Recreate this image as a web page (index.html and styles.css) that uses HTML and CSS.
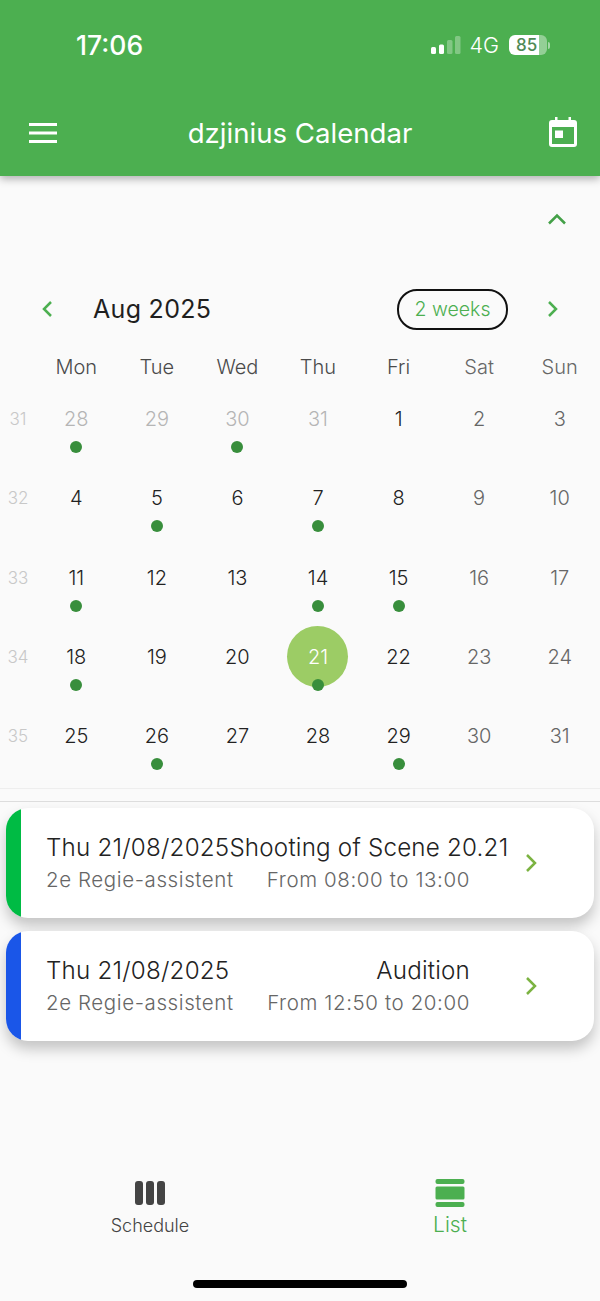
FILE: index.html
```html
<!DOCTYPE html>
<html lang="en">
<head>
    <meta charset="UTF-8">
    <meta name="viewport" content="width=device-width, initial-scale=1.0">
    <title>dzjinius Calendar</title>
    <link rel="stylesheet" href="styles.css">
</head>
<body>
    <div class="app">
        <header class="header">
            <div class="status-bar">
                <span class="time">17:06</span>
                <div class="status-right">
                    <svg class="signal" width="30" height="18" viewBox="0 0 30 18">
                        <rect x="0" y="11" width="5" height="7" rx="1.500" fill="#fff"/>
                        <rect x="8" y="8.500" width="5" height="9.500" rx="1.500" fill="#fff"/>
                        <rect x="16" y="4" width="5.500" height="14" rx="1.500" fill="#fff" fill-opacity="0.3"/>
                        <rect x="24" y="0" width="5.500" height="18" rx="1.500" fill="#fff" fill-opacity="0.3"/>
                    </svg>
                    <span class="network">4G</span>
                    <div class="battery">
                        <div class="battery-body"><span>85</span></div>
                        <div class="battery-tip"></div>
                    </div>
                </div>
            </div>
            <div class="toolbar">
                <svg class="menu-icon" width="28" height="20" viewBox="0 0 28 20">
                    <rect x="0" y="0" width="28" height="3" fill="#fff"/>
                    <rect x="0" y="8.500" width="28" height="3" fill="#fff"/>
                    <rect x="0" y="17" width="28" height="3" fill="#fff"/>
                </svg>
                <h1 class="title">dzjinius Calendar</h1>
                <svg class="cal-icon" width="28" height="30" viewBox="0 0 28 30">
                    <path fill="#fff" fill-rule="evenodd" d="M6 0h2.500v3h11V0H22v3h3a3 3 0 0 1 3 3v21a3 3 0 0 1-3 3H3a3 3 0 0 1-3-3V6a3 3 0 0 1 3-3h3V0zM3 10v17h22V10H3z"/>
                    <rect x="6" y="13.500" width="8" height="7.500" fill="#fff"/>
                </svg>
            </div>
        </header>

        <div class="collapse-row">
            <svg width="20" height="12" viewBox="0 0 20 12"><path d="M2 10.500L10 2.500l8 8" fill="none" stroke="#43a047" stroke-width="2.500"/></svg>
        </div>

        <section class="calendar">
            <div class="month-row">
                <svg class="nav-prev" width="12" height="18" viewBox="0 0 12 18"><path d="M10 2L3 9l7 7" fill="none" stroke="#4caf50" stroke-width="2.500"/></svg>
                <span class="month">Aug 2025</span>
                <span class="format-btn">2 weeks</span>
                <svg class="nav-next" width="12" height="18" viewBox="0 0 12 18"><path d="M2 2l7 7-7 7" fill="none" stroke="#4caf50" stroke-width="2.500"/></svg>
            </div>

            <div class="cal-grid weekdays">
                <span></span>
                <span>Mon</span><span>Tue</span><span>Wed</span><span>Thu</span><span>Fri</span><span class="end">Sat</span><span class="end">Sun</span>
            </div>

            <div class="cal-grid week">
                <span class="wk">31</span>
                <div class="day out">28<i class="dot"></i></div>
                <div class="day out">29</div>
                <div class="day out">30<i class="dot"></i></div>
                <div class="day out">31</div>
                <div class="day">1</div>
                <div class="day end">2</div>
                <div class="day end">3</div>
            </div>
            <div class="cal-grid week">
                <span class="wk">32</span>
                <div class="day">4</div>
                <div class="day">5<i class="dot"></i></div>
                <div class="day">6</div>
                <div class="day">7<i class="dot"></i></div>
                <div class="day">8</div>
                <div class="day end">9</div>
                <div class="day end">10</div>
            </div>
            <div class="cal-grid week">
                <span class="wk">33</span>
                <div class="day">11<i class="dot"></i></div>
                <div class="day">12</div>
                <div class="day">13</div>
                <div class="day">14<i class="dot"></i></div>
                <div class="day">15<i class="dot"></i></div>
                <div class="day end">16</div>
                <div class="day end">17</div>
            </div>
            <div class="cal-grid week">
                <span class="wk">34</span>
                <div class="day">18<i class="dot"></i></div>
                <div class="day">19</div>
                <div class="day">20</div>
                <div class="day selected">21<i class="dot"></i></div>
                <div class="day">22</div>
                <div class="day end">23</div>
                <div class="day end">24</div>
            </div>
            <div class="cal-grid week">
                <span class="wk">35</span>
                <div class="day">25</div>
                <div class="day">26<i class="dot"></i></div>
                <div class="day">27</div>
                <div class="day">28</div>
                <div class="day">29<i class="dot"></i></div>
                <div class="day end">30</div>
                <div class="day end">31</div>
            </div>
        </section>

        <section class="events">
            <div class="card">
                <div class="stripe green"></div>
                <div class="card-body">
                    <div class="card-line main"><span>Thu 21/08/2025</span><span>Shooting of Scene 20.21</span></div>
                    <div class="card-line sub"><span>2e Regie-assistent</span><span>From 08:00 to 13:00</span></div>
                </div>
                <svg class="chev" width="14" height="20" viewBox="0 0 14 20"><path d="M2 2l8 8-8 8" fill="none" stroke="#7cb342" stroke-width="2.500"/></svg>
            </div>
            <div class="card">
                <div class="stripe blue"></div>
                <div class="card-body">
                    <div class="card-line main"><span>Thu 21/08/2025</span><span>Audition</span></div>
                    <div class="card-line sub"><span>2e Regie-assistent</span><span>From 12:50 to 20:00</span></div>
                </div>
                <svg class="chev" width="14" height="20" viewBox="0 0 14 20"><path d="M2 2l8 8-8 8" fill="none" stroke="#7cb342" stroke-width="2.500"/></svg>
            </div>
        </section>

        <nav class="tabbar">
            <div class="tab">
                <svg width="32" height="26" viewBox="0 0 32 26">
                    <rect x="1" y="1" width="8" height="24" rx="3" fill="#444"/>
                    <rect x="12" y="1" width="8" height="24" rx="3" fill="#444"/>
                    <rect x="23" y="1" width="8" height="24" rx="3" fill="#444"/>
                </svg>
                <span>Schedule</span>
            </div>
            <div class="tab active">
                <svg width="30" height="28" viewBox="0 0 30 28">
                    <rect x="0.500" y="0" width="29" height="5" rx="2" fill="#4caf50"/>
                    <rect x="0.500" y="7.500" width="29" height="13" rx="1.500" fill="#4caf50"/>
                    <rect x="0.500" y="23" width="29" height="5" rx="2" fill="#4caf50"/>
                </svg>
                <span>List</span>
            </div>
        </nav>
        <div class="home-bar"></div>
    </div>
</body>
</html>
```

FILE: styles.css
```css
* {
    box-sizing: border-box;
}
body {
    margin: 0;
    background-color: #fafafa;
    font-family: 'Inter', 'Roboto', sans-serif;
    color: #222;
}
.app {
    width: 600px;
    height: 1301px;
    display: flex;
    flex-direction: column;
    overflow: hidden;
}
.header {
    height: 176px;
    flex: none;
    background-color: #4caf50;
    color: #fff;
    box-shadow: 0 3px 8px rgba(0, 0, 0, 0.3);
    padding-top: 28px;
    position: relative;
}
.status-bar {
    height: 34px;
    display: flex;
    justify-content: space-between;
    align-items: center;
    padding: 0 50px 0 76px;
}
.time {
    font-size: 26.5px;
    font-weight: 500;
}
.status-right {
    display: flex;
    align-items: center;
}
.signal {
    margin-right: 8px;
}
.network {
    font-size: 21.5px;
    font-weight: 300;
    margin-right: 10px;
}
.battery {
    display: flex;
    align-items: center;
}
.battery-body {
    width: 38px;
    height: 20px;
    padding-left: 7px;
    border-radius: 6px;
    background: linear-gradient(to right, #fff 78%, rgba(255, 255, 255, 0.4) 78%);
    color: #4f8a55;
    font-size: 17px;
    font-weight: 500;
    line-height: 20px;
}
.battery-tip {
    width: 2px;
    height: 7px;
    margin-left: 1px;
    border-radius: 0 2px 2px 0;
    background-color: rgba(255, 255, 255, 0.5);
}
.toolbar {
    margin-top: 49px;
    height: 44px;
    display: flex;
    justify-content: space-between;
    align-items: center;
    padding: 0 23px 0 29px;
}
.title {
    margin: 0 6px 0 0;
    font-size: 27.6px;
    font-weight: 400;
}
.cal-icon {
    margin-top: -3px;
}
.collapse-row {
    height: 112px;
    flex: none;
    display: flex;
    justify-content: flex-end;
    padding: 37px 33px 0 0;
}
.collapse-row svg {
    display: block;
}
.month-row {
    height: 42px;
    display: flex;
    align-items: center;
    padding: 0 41px;
}
.month {
    font-size: 25px;
    margin-left: 40px;
    letter-spacing: 0.3px;
    color: #1f1f1f;
}
.format-btn {
    margin-left: auto;
    margin-right: 39px;
    width: 111px;
    height: 41px;
    border: 2px solid #111;
    border-radius: 20px;
    color: #4caf50;
    font-size: 19.500px;
    font-weight: 350;
    line-height: 37px;
    text-align: center;
}
.cal-grid {
    display: grid;
    grid-template-columns: 36px repeat(7, 1fr);
    text-align: center;
}
.weekdays {
    margin-top: 17px;
    height: 40px;
    align-items: center;
    font-size: 20px;
    font-weight: 350;
    color: #4a4a4a;
}
.weekdays .end {
    color: #666;
}
.calendar {
    border-bottom: 1px solid #eee;
    padding-bottom: 5px;
}
.week {
    height: 79.3px;
    padding-top: 17px;
    align-items: start;
}
.wk {
    font-size: 17px;
    font-weight: 300;
    line-height: 30px;
    color: #c8c8c8;
}
.day {
    position: relative;
    height: 30px;
    font-size: 20px;
    font-weight: 350;
    line-height: 30px;
    color: #222;
}
.day.out {
    color: #b5b5b5;
}
.day.end {
    color: #666;
}
.dot {
    position: absolute;
    left: 50%;
    top: 37px;
    width: 12px;
    height: 12px;
    margin-left: -6px;
    border-radius: 50%;
    background-color: #388e3c;
}
.day.selected {
    color: #fff;
    z-index: 0;
}
.day.selected::before {
    content: '';
    position: absolute;
    left: 50%;
    top: 50%;
    width: 61px;
    height: 61px;
    margin: -30.500px 0 0 -30.500px;
    border-radius: 50%;
    background-color: #9ccc65;
    z-index: -1;
}
.events {
    border-top: 1px solid #ddd;
    margin-top: 12px;
    padding: 6px 6px 0;
    display: flex;
    flex-direction: column;
    gap: 13px;
}
.card {
    height: 110px;
    display: flex;
    align-items: center;
    background-color: #fff;
    border-radius: 22px;
    box-shadow: 0 8px 14px rgba(0, 0, 0, 0.22);
    overflow: hidden;
}
.stripe {
    width: 15px;
    align-self: stretch;
    flex: none;
}
.stripe.green {
    background-color: #00bb44;
}
.stripe.blue {
    background-color: #1a56e8;
}
.card-body {
    width: 424px;
    margin-left: 25px;
    flex: none;
    white-space: nowrap;
}
.card-line {
    display: flex;
    justify-content: space-between;
}
.card-line.main {
    font-size: 24.2px;
    font-weight: 350;
    letter-spacing: 0.2px;
    line-height: 33px;
    color: #222;
}
.card-line.sub {
    font-size: 20.5px;
    letter-spacing: 0.6px;
    font-weight: 300;
    line-height: 31px;
    color: #666;
}
.chev {
    margin-left: 55px;
}
.tabbar {
    margin-top: auto;
    display: flex;
    height: 86px;
}
.tab {
    flex: 1;
    display: flex;
    flex-direction: column;
    align-items: center;
    font-size: 18px;
    font-weight: 350;
    color: #444;
}
.tab span {
    margin-top: 9px;
}
.tab.active {
    color: #4caf50;
    font-size: 21px;
}
.tab.active svg {
    margin-top: -1px;
}
.tab.active span {
    margin-top: 5px;
}
.home-bar {
    width: 214px;
    height: 8px;
    border-radius: 4px;
    background-color: #000;
    margin: 14px auto 13px;
    flex: none;
}
```
